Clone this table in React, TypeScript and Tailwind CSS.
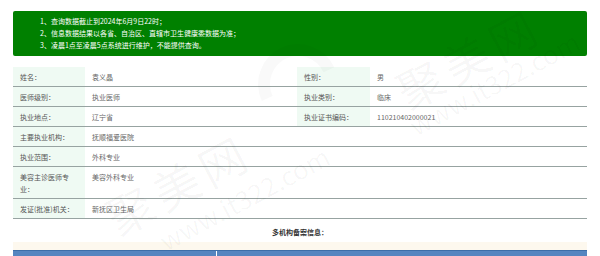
const notices = [
  '查询数据截止到2024年6月9日22时；',
  '信息数据结果以各省、自治区、直辖市卫生健康委数据为准；',
  '凌晨1点至凌晨5点系统进行维护，不能提供查询。',
];

const label = 'bg-[#effaf3] text-[#555] pl-[7px] pr-[8px] pt-1 pb-[3px] align-top border-b border-[#97a3a1] text-left font-normal';
const value = 'text-[#666] pl-[7px] pr-2 pt-1 pb-[3px] align-top border-b border-[#97a3a1]';

function Watermark() {
  return (
    <div className="pointer-events-none absolute inset-0 overflow-hidden select-none">
      <span className="absolute left-[390px] top-[34px] -rotate-[28deg] text-[46px] leading-none text-black/[0.035] tracking-[6px]">聚美网</span>
      <span className="absolute left-[400px] top-[70px] -rotate-[28deg] text-[26px] leading-none text-black/[0.035]">www.it322.com</span>
      <span className="absolute left-[100px] top-[160px] -rotate-[28deg] text-[46px] leading-none text-black/[0.035] tracking-[6px]">聚美网</span>
      <span className="absolute left-[150px] top-[185px] -rotate-[28deg] text-[26px] leading-none text-black/[0.035]">www.it322.com</span>
      <div className="absolute left-[258px] top-[44px] h-[80px] w-[80px] rotate-[20deg] rounded-full border-[12px] border-black/[0.025] border-b-transparent border-r-transparent" />
    </div>
  );
}

export default function App() {
  return (
    <div className="relative min-h-screen bg-white px-[13px] pt-[11px] pb-4 font-['Noto_Sans_CJK_SC','Noto_Sans',sans-serif] text-[7px] leading-[12px]">
      <div className="h-[45px] rounded-[2px] bg-[#008000] pl-[27px] pt-1 text-white">
        {notices.map((t, i) => (
          <p key={i}>{i + 1}、{t}</p>
        ))}
      </div>

      <table className="mt-[11px] w-full table-fixed border-collapse">
        <colgroup>
          <col className="w-[72px]" />
          <col className="w-[212px]" />
          <col className="w-[73px]" />
          <col />
        </colgroup>
        <tbody>
          <tr>
            <th className={label}>姓名：</th>
            <td className={value}>袁义晶</td>
            <th className={label}>性别：</th>
            <td className={value}>男</td>
          </tr>
          <tr>
            <th className={label}>医师级别：</th>
            <td className={value}>执业医师</td>
            <th className={label}>执业类别：</th>
            <td className={value}>临床</td>
          </tr>
          <tr>
            <th className={label}>执业地点：</th>
            <td className={value}>辽宁省</td>
            <th className={label}>执业证书编码：</th>
            <td className={value}>110210402000021</td>
          </tr>
          <tr>
            <th className={label}>主要执业机构：</th>
            <td className={value} colSpan={3}>抚顺福爱医院</td>
          </tr>
          <tr>
            <th className={label}>执业范围：</th>
            <td className={value} colSpan={3}>外科专业</td>
          </tr>
          <tr>
            <th className={label}>美容主诊医师专<br />业：</th>
            <td className={value} colSpan={3}>美容外科专业</td>
          </tr>
          <tr>
            <th className={label}>发证(批准)机关：</th>
            <td className={value} colSpan={3}>新抚区卫生局</td>
          </tr>
          <tr>
            <td colSpan={4} className="pt-[7px] pb-[4px] text-center font-bold text-[#333]">多机构备案信息：</td>
          </tr>
        </tbody>
      </table>

      <div className="h-2 bg-[#fdf8ee]" />
      <div className="flex h-6 border-t border-[#3d6ea8] bg-[#5585c0]">
        <div className="w-[204px] border-r border-white" />
        <div className="flex-1" />
      </div>

      <Watermark />
    </div>
  );
}
